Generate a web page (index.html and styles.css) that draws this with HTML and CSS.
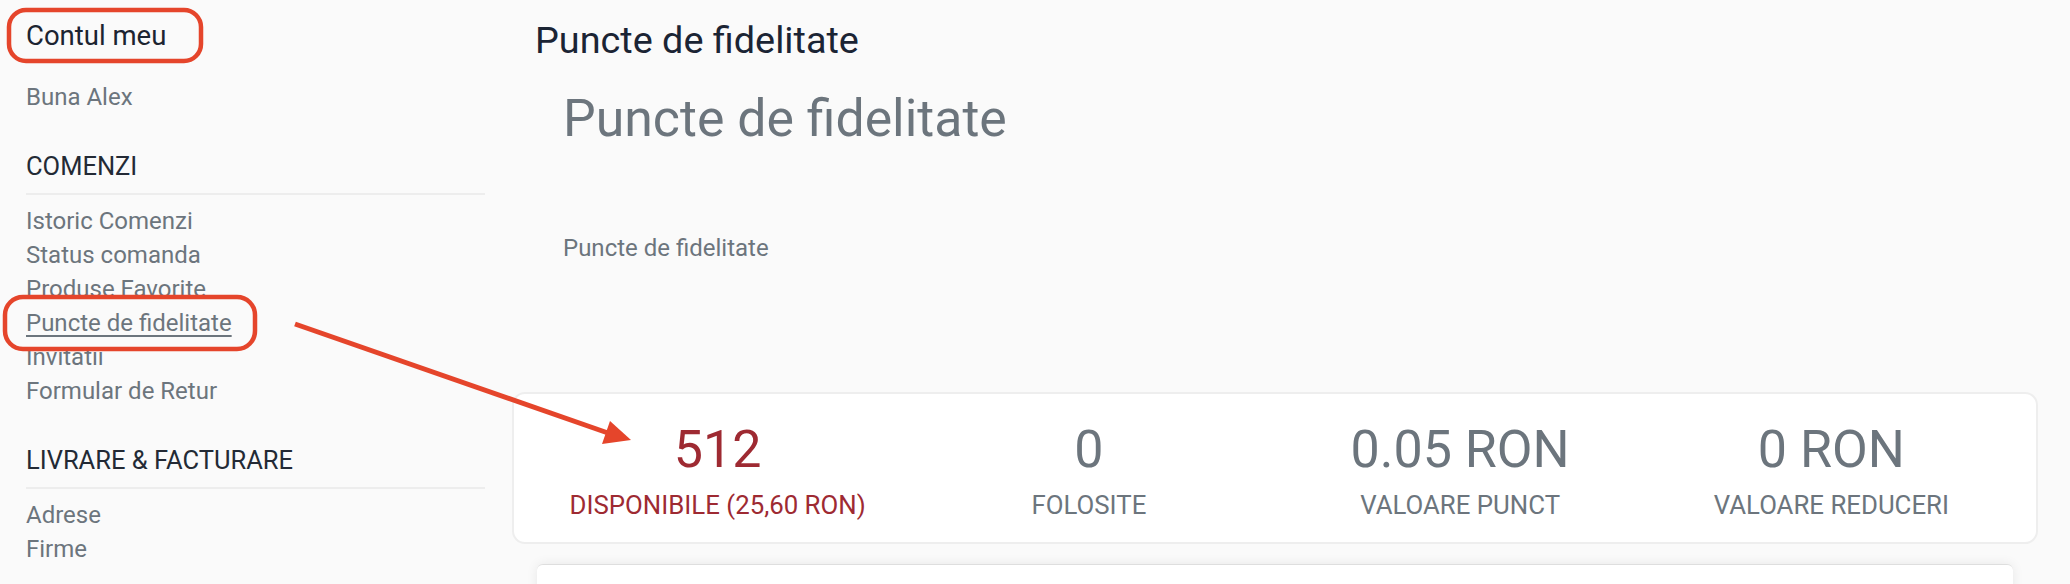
FILE: index.html
```html
<!DOCTYPE html>
<html lang="ro">
<head>
<meta charset="utf-8">
<title>Puncte de fidelitate</title>
<link rel="stylesheet" href="styles.css">
</head>
<body>
<div class="page">
  <aside class="sidebar">
    <h2 class="account-title">Contul meu</h2>
    <p class="greeting">Buna Alex</p>
    <section class="nav-group">
      <h3 class="nav-heading">COMENZI</h3>
      <ul class="nav-list">
        <li><a class="nav-link" href="#">Istoric Comenzi</a></li>
        <li><a class="nav-link" href="#">Status comanda</a></li>
        <li><a class="nav-link" href="#">Produse Favorite</a></li>
        <li><a class="nav-link nav-link-active" href="#">Puncte de fidelitate</a></li>
        <li><a class="nav-link" href="#">Invitatii</a></li>
        <li><a class="nav-link" href="#">Formular de Retur</a></li>
      </ul>
    </section>
    <section class="nav-group">
      <h3 class="nav-heading">LIVRARE &amp; FACTURARE</h3>
      <ul class="nav-list">
        <li><a class="nav-link" href="#">Adrese</a></li>
        <li><a class="nav-link" href="#">Firme</a></li>
      </ul>
    </section>
  </aside>

  <main class="content">
    <h1 class="page-title">Puncte de fidelitate</h1>
    <div class="intro">
      <h2 class="display-title">Puncte de fidelitate</h2>
      <p class="intro-text">Puncte de fidelitate</p>
    </div>
    <div class="stats-card">
      <div class="stat stat-primary">
        <div class="stat-value">512</div>
        <div class="stat-label">DISPONIBILE (25,60 RON)</div>
      </div>
      <div class="stat">
        <div class="stat-value">0</div>
        <div class="stat-label">FOLOSITE</div>
      </div>
      <div class="stat">
        <div class="stat-value">0.05 RON</div>
        <div class="stat-label">VALOARE PUNCT</div>
      </div>
      <div class="stat">
        <div class="stat-value">0 RON</div>
        <div class="stat-label">VALOARE REDUCERI</div>
      </div>
    </div>
    <div class="history-card"></div>
  </main>

  <svg class="annotations" width="2070" height="584" viewBox="0 0 2070 584" aria-hidden="true">
    <rect x="9" y="10" width="192" height="51" rx="17" ry="17" fill="none" stroke="#e5452b" stroke-width="4.5"/>
    <rect x="5" y="297" width="250" height="52" rx="18" ry="18" fill="none" stroke="#e5452b" stroke-width="4.5"/>
    <line x1="295" y1="324" x2="608" y2="433" stroke="#e5452b" stroke-width="5"/>
    <polygon points="610,421 631,440 602,444" fill="#e5452b"/>
  </svg>
</div>
</body>
</html>
```

FILE: styles.css
```css
* {
  box-sizing: border-box;
}

html, body {
  margin: 0;
  padding: 0;
}

body {
  background: #fafafa;
  font-family: Roboto, "Noto Sans", "Liberation Sans", sans-serif;
  color: #6c757d;
  overflow: hidden;
}

.page {
  position: relative;
  display: flex;
  align-items: flex-start;
  width: 2070px;
  height: 584px;
  overflow: hidden;
}

/* Sidebar */
.sidebar {
  flex: 0 0 auto;
  width: 485px;
  padding: 19px 0 0 26px;
}

.account-title {
  margin: 0;
  font-size: 27.5px;
  line-height: 34px;
  font-weight: 400;
  color: #1c2431;
}

.greeting {
  margin: 27px 0 0;
  font-size: 24px;
  line-height: 34px;
  color: #6c757d;
}

.nav-group {
  margin-top: 35px;
}

.nav-heading {
  margin: 0;
  padding-bottom: 10px;
  border-bottom: 2px solid #ededed;
  font-size: 25.5px;
  line-height: 34px;
  font-weight: 400;
  color: #232a35;
}

.nav-list {
  list-style: none;
  margin: 9px 0 0;
  padding: 0;
}

.nav-list li {
  font-size: 24px;
  line-height: 34px;
}

.nav-link {
  color: #6c757d;
  text-decoration: none;
}

.nav-link-active {
  text-decoration: underline;
  text-decoration-thickness: 2px;
  text-underline-offset: 4px;
}

/* Main content */
.content {
  flex: 0 0 auto;
  width: 1526px;
  margin-left: 27px;
  padding-top: 18px;
}

.page-title {
  margin: 0 0 0 23px;
  font-size: 37.8px;
  line-height: 44px;
  font-weight: 400;
  color: #1b2434;
}

.intro {
  padding-left: 51px;
}

.display-title {
  margin: 26px 0 0;
  font-size: 51.8px;
  line-height: 62px;
  font-weight: 400;
  color: #6c757d;
}

.intro-text {
  margin: 81px 0 0;
  font-size: 24px;
  line-height: 34px;
  color: #6c757d;
}

.stats-card {
  display: grid;
  grid-template-columns: repeat(4, 1fr);
  margin-top: 127px;
  padding: 25px 19px 22px 18px;
  background: #ffffff;
  border: 2px solid #eeeeee;
  border-radius: 13px;
  text-align: center;
}

.stat-value {
  font-size: 52px;
  line-height: 62px;
  color: #6c757d;
}

.stat-label {
  margin-top: 9px;
  font-size: 25.8px;
  line-height: 30px;
  color: #6c757d;
}

.stat-primary .stat-value,
.stat-primary .stat-label {
  color: #9e2a32;
}

.history-card {
  height: 120px;
  margin: 20px 25px 0;
  background: #ffffff;
  border-top: 1px solid #dedede;
  border-radius: 6px;
  box-shadow: 0 0 12px rgba(0, 0, 0, 0.08);
}

/* Annotation overlay */
.annotations {
  position: absolute;
  top: 0;
  left: 0;
  pointer-events: none;
}
```
